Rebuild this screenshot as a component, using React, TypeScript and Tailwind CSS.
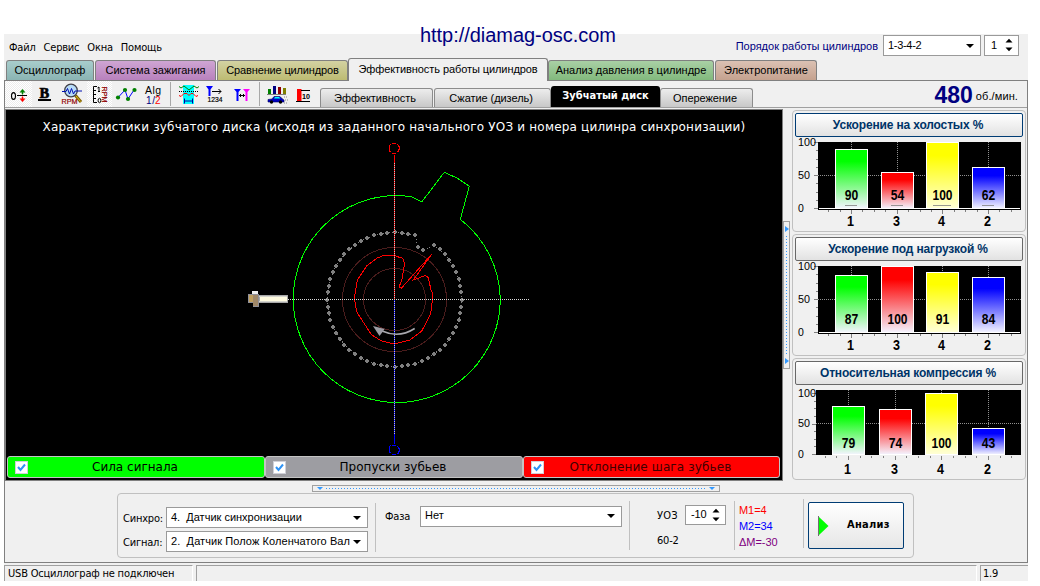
import type { ReactNode } from 'react';

const UI = "font-['Liberation_Sans',Arial,sans-serif] text-[11px]";
const TAHOMA = "font-['DejaVu_Sans_Condensed','DejaVu_Sans',sans-serif] text-[11px] tracking-[-0.2px]";

/* ---------- toolbar ---------- */

function ToolIcon({ x, w, className = '', pressed = false, children }: { x: number; w: number; className?: string; pressed?: boolean; children: ReactNode }) {
  return (
    <div className={`h-[26px] shrink-0 ${pressed ? 'bg-[repeating-conic-gradient(#ffffff_0_25%,#ececec_0_50%)] bg-[length:2px_2px]' : ''} ${className}`}>
      <svg width={w} height={26} viewBox={`${x} 81 ${w} 26`} className="block" fontFamily="Liberation Sans, sans-serif">
        {children}
      </svg>
    </div>
  );
}

function Separator() {
  return <div className="h-[24px] w-[3px] shrink-0 self-center border-l border-[#a8a8a8]" />;
}

function Toolbar() {
  return (
    <div className="flex h-[26px] items-start">
      <ToolIcon x={5} w={27} pressed>
        <ellipse cx="13.5" cy="96" rx="2" ry="3.4" fill="none" stroke="#000" strokeWidth="1.1" />
        <path d="M17 95.5h10" stroke="#000" />
        <path d="M19.500 92.500l3-3.500 3 3.500h-2.300v2h-1.400v-2z" fill="#008000" />
        <path d="M19.500 98.500l3 3.500 3-3.500h-2.300v-2h-1.400v2z" fill="#f00" />
      </ToolIcon>
      <ToolIcon x={32} w={27}>
        <text x="39.500" y="97.500" fontFamily="Liberation Serif, serif" fontWeight="bold" fontSize="14.500" stroke="#000" strokeWidth=".7">B</text>
        <path d="M38 99.500h13" stroke="#000" strokeWidth="2" shapeRendering="crispEdges" />
      </ToolIcon>
      <ToolIcon x={59} w={28}>
        <path d="M75.500 95.500l5.500 6.500" stroke="#806000" strokeWidth="3" />
        <path d="M76 96l4.500 5.500" stroke="#e0c020" strokeWidth="1" />
        <circle cx="71" cy="90.500" r="6.300" fill="#b8dcf8" stroke="#404048" strokeWidth="1.300" />
        <path d="M62 91.500h4l1.500-3 2 5.500 2-5.500 2 5.500 1.500-3h7" fill="none" stroke="#0010b0" />
        <text x="61.500" y="103.500" fontSize="7.500" textLength="16" lengthAdjust="spacingAndGlyphs" fill="#900000" stroke="#900000" strokeWidth=".2">RPM</text>
      </ToolIcon>
      <ToolIcon x={87} w={25} pressed>
        <path d="M97 86.500h-3.500v16h3.500M94 90.500h2M94 94.500h2M94 98.500h2" fill="none" stroke="#000" />
        <path d="M97.500 88l1.500-1v5M98 91.500h2" fill="none" stroke="#000" />
        <ellipse cx="99.500" cy="100.500" rx="1.400" ry="2.200" fill="none" stroke="#000" />
        <text transform="translate(102 86.500) rotate(90)" fontSize="7.500" textLength="16" lengthAdjust="spacingAndGlyphs" fill="#900000" stroke="#900000" strokeWidth=".2">RPM</text>
      </ToolIcon>
      <ToolIcon x={112} w={30}>
        <path d="M118 97.500l7-7.500 3 9 6-9" fill="none" stroke="#0000ff" />
        <g fill="#008000"><circle cx="118" cy="97.500" r="2.100" /><circle cx="125" cy="90" r="2.100" /><circle cx="128" cy="99" r="2.100" /><circle cx="134.500" cy="90" r="2.100" /></g>
      </ToolIcon>
      <ToolIcon x={142} w={28}>
        <text x="145" y="94" fontSize="10.500" textLength="16" lengthAdjust="spacing">Alg</text>
        <text x="146" y="103.500" fontSize="10" fill="#000080" textLength="9" lengthAdjust="spacing">1/</text>
        <text x="155" y="103.500" fontSize="10" fill="#f00">2</text>
      </ToolIcon>
      <Separator />
      <ToolIcon x={173} w={29}>
        <path d="M183 85h11v19h-11z" fill="#00ffff" />
        <path d="M179 86.500l2 1.500 3-2 5 4 5-4 3 2 2-1.500" fill="none" stroke="#008000" />
        <path d="M179 91.500h19" stroke="#000" strokeDasharray="1 1" />
        <path d="M179 95.500l2 1 3-3 3 0 2 2 2-2 2 0 3 3 2-1" fill="none" stroke="#f00" />
        <path d="M184.500 98.500v5M192.500 98.500v5M185 101h7" stroke="#0000a0" />
      </ToolIcon>
      <ToolIcon x={202} w={27}>
        <path d="M206 86h7l-2.500 3.500v6.500h-2v-6.500z" fill="#0000ff" />
        <path d="M212 91.500h9M218.500 89l2.500 2.500-2.500 2.500" fill="none" stroke="#000" />
        <text x="207.500" y="102" fontSize="7.500" textLength="15" lengthAdjust="spacingAndGlyphs" stroke="#000" strokeWidth=".2">1234</text>
      </ToolIcon>
      <ToolIcon x={229} w={30}>
        <path d="M234 89h7l-2.500 3v9h-2v-9z" fill="#0000ff" />
        <path d="M243 89h7l-2.500 3v9h-2v-9z" fill="#ff00ff" />
        <path d="M239 95.500h6M240.500 94v3M243.500 94v3" stroke="#000" />
      </ToolIcon>
      <Separator />
      <ToolIcon x={262} w={30}>
        <path d="M268 89h3v5h-3z" fill="#008000" /><path d="M273 86h3v8h-3z" fill="#000080" /><path d="M278 87h3v7h-3z" fill="#900000" /><path d="M283 88h3v6h-3z" fill="#808000" />
        <path d="M267 94.500h19" stroke="#808080" />
        <path d="M268 99.500l4-.500 2-2.500h6l2.500 2.500 1.500 1v2h-16z" fill="#0000c0" stroke="#000060" strokeWidth=".6" />
        <path d="M274 98.500l1-1.500h4l1.500 1.500z" fill="#00ffff" />
        <circle cx="271.500" cy="102" r="1.700" /><circle cx="280.500" cy="102" r="1.700" />
        <path d="M284 97h3M285 100h3M284 103h3" stroke="#888" strokeDasharray="1 1" />
      </ToolIcon>
      <ToolIcon x={292} w={28}>
        <path d="M297 89h4.500v12H297z" fill="#f00" />
        <path d="M301 90.500h9M296 101.500h14" stroke="#000" />
        <text x="302" y="99" fontSize="8" fontWeight="bold" textLength="8" lengthAdjust="spacingAndGlyphs">10</text>
      </ToolIcon>
      <div className="flex h-[26px] items-end">
        <SubTab label="Эффективность" width="w-[113px]" />
        <SubTab label="Сжатие (дизель)" width="w-[117px]" gap="ml-px" />
        <div className="flex h-[21px] w-[109px] items-center justify-center rounded-t-[3px] bg-black pb-px font-['DejaVu_Sans_Condensed','DejaVu_Sans',sans-serif] text-[11px] font-bold text-white">Зубчатый диск</div>
        <SubTab label="Опережение" width="w-[93px]" />
      </div>
      <div className="flex h-[26px] flex-1 items-start justify-end pr-[9px]">
        <span className="font-['Liberation_Sans',sans-serif] text-[23px] leading-[29px] font-bold text-[#000080]">480</span>
        <span className={`${UI} ml-[3px] leading-[31px] tracking-[0.1px]`}>об./мин.</span>
      </div>
    </div>
  );
}

function SubTab({ label, width, gap = '' }: { label: string; width: string; gap?: string }) {
  return (
    <div className={`${UI} flex h-[19px] items-center justify-center rounded-t-[3px] border border-b-0 border-[#8c8c8c] bg-gradient-to-b from-[#ededed] to-[#c8c8c8] pr-[3px] tracking-[-0.06px] ${width} ${gap}`}>{label}</div>
  );
}

/* ---------- top tabs ---------- */

const TABS = [
  { label: 'Осциллограф', cls: 'w-[88px] bg-gradient-to-b from-[#a8cdcc] to-[#8ab4b3]' },
  { label: 'Система зажигания', cls: 'w-[121px] ml-px bg-gradient-to-b from-[#cfa5d3] to-[#b881bd]' },
  { label: 'Сравнение цилиндров', cls: 'w-[131px] ml-px bg-gradient-to-b from-[#d3d2a2] to-[#bdbb72] tracking-[-0.15px]' },
  { label: 'Эффективность работы цилиндров', cls: 'w-[200px] active' },
  { label: 'Анализ давления в цилиндре', cls: 'w-[166px] bg-gradient-to-b from-[#a9d0a5] to-[#82b97d]' },
  { label: 'Электропитание', cls: 'w-[102px] ml-px bg-gradient-to-b from-[#dbc1b3] to-[#c5a28f]' },
];

function MainTabs() {
  return (
    <div className="flex h-[23px] items-end border-b border-[#808080] pl-[2px]">
      {TABS.map((t) =>
        t.cls.endsWith('active') ? (
          <div key={t.label} className={`${UI} mb-[-1px] flex h-[23px] w-[200px] items-center justify-center rounded-t-[3px] border border-b-0 border-[#808080] bg-[#f0f0f0] pb-px tracking-[-0.08px]`}>{t.label}</div>
        ) : (
          <div key={t.label} className={`${UI} flex h-[20px] items-center justify-center rounded-t-[3px] border border-b-0 border-[#808080] ${t.cls}`}>{t.label}</div>
        ),
      )}
    </div>
  );
}

/* ---------- form controls ---------- */

function Combo({ value, className }: { value: string; className: string }) {
  return (
    <div className={`${UI} flex shrink-0 items-center justify-between border border-[#9a9a9a] bg-white pr-[6px] pb-px pl-[4px] ${className}`}>
      <span className="whitespace-pre">{value}</span>
      <svg width="8" height="4" viewBox="0 0 8 4" className="mt-px ml-[3px] shrink-0"><path d="M0 0h8L4 4z" /></svg>
    </div>
  );
}

function Spinner({ value, className }: { value: string; className: string }) {
  return (
    <div className={`${UI} flex shrink-0 items-center justify-between border border-[#9a9a9a] bg-white pr-[5px] pb-px pl-[5px] ${className}`}>
      <span>{value}</span>
      <svg width="8" height="14" viewBox="0 0 8 14"><path d="M0.500 4.500h7L4 .8zM0.500 9.500h7L4 13.200z" /></svg>
    </div>
  );
}

/* ---------- disk diagram ---------- */

const CX = 394.5;
const CY = 299.5;

function teeth() {
  const list: [number, number][] = [];
  for (let a = 36; a <= 378; a += 6) {
    const r = (a * Math.PI) / 180;
    list.push([CX + 67.3 * Math.sin(r), CY - 67.3 * Math.cos(r)]);
  }
  list.push([418, 247], [423, 250]);
  return list;
}

function Disk() {
  const dots = teeth();
  return (
    <svg width={776} height={314} viewBox="6 142 776 314" className="block" shapeRendering="crispEdges" fill="none">
      <circle cx="394.500" cy="299.500" r="52" stroke="#4a1c1c" />
      <circle cx="394.500" cy="299.500" r="31" stroke="#4a1c1c" />
      <polygon points={dots.map((d) => d.map((n) => n.toFixed(1)).join(',')).join(' ')} stroke="#808080" strokeDasharray="1 2" />
      {dots.map(([x, y]) => (
        <g key={`${x}-${y}`} fill="#808080">
          <rect x={Math.round(x) - 2} y={Math.round(y) - 1} width={4} height={2} />
          <rect x={Math.round(x) - 1} y={Math.round(y) - 2} width={2} height={4} />
        </g>
      ))}
      <path d="M500.300 299.500A103.500 103.500 0 1 1 396.800 195.500L405 196L411.700 197L421.700 202L444.300 172.300L457 178L469.300 186.300L460.300 219.300A103.500 103.500 0 0 1 500.300 299.500" stroke="#00ff00" />
      <path d="M384 255.300L394 255.300L399.300 257.300L402.700 258.300L404.700 264L403.300 270L402.700 276.700L399.300 286.700L401.300 288.300L414 274L431.700 254.300L423.300 266L413.300 280L418.300 278.300L425.300 275.300L428.300 277.700L431 290L432.700 294L432 303.300L430.700 313.300L425 325L421.700 331L410 340L394 344L381.700 341L371.700 335L364 323.300L356.700 311.700L354.300 298.300L357.300 280L366.700 266L376.700 258.300Z" stroke="#ff0000" />
      <path d="M394.500 155V299" stroke="#ff0000" />
      <path d="M394.500 299V444" stroke="#0000ff" />
      <path d="M394.500 163V434" stroke="#c8c8c8" strokeDasharray="1 1" />
      <path d="M288 299.500H529" stroke="#d8d8d8" strokeDasharray="1 1" />
      <path d="M392 143.500h4M397.500 144.500l1.500 2v3l-1.500 3M396 153.500h-4M390.500 152.500l-1.500-3v-3l1.500-2" stroke="#ff0000" />
      <path d="M392 445.500h4M397.500 446.500l1.500 2v3l-1.500 3M396 454.500h-4M390.500 453.500l-1.500-3v-3l1.500-2" stroke="#0000ff" />
      <g shapeRendering="geometricPrecision">
        <path d="M414.700 328.500Q399 338.500 382 331" stroke="#a8a8ae" strokeWidth="1.500" />
        <path d="M373 326L384.700 329L379.500 336Z" fill="#9c9ca4" />
      </g>
      <rect x="252" y="291" width="6" height="3" fill="#f0f0f0" />
      <rect x="253.500" y="294.500" width="5" height="12" fill="#b09468" stroke="#909098" />
      <rect x="248.500" y="294.500" width="10" height="8" fill="#c0a060" stroke="#909098" />
      <rect x="253" y="295" width="5" height="11" fill="#a08868" />
      <rect x="259.500" y="295.500" width="28" height="7" fill="#fffbe0" stroke="#a8a8a8" />
      <path d="M259 296.500h28M259 301.500h28" stroke="#d4d4cc" />
    </svg>
  );
}

function Legend({ label, className, textClass = '' }: { label: string; className: string; textClass?: string }) {
  return (
    <div className={`flex h-[22px] shrink-0 items-center rounded-[3px] border border-[#c4c4c4] pl-[7px] ${className}`}>
      <div className="flex size-[13px] items-center justify-center border border-[#d0d0d8] bg-white">
        <svg width="9" height="9" viewBox="0 0 9 9"><path d="M1 4l2.500 3L8 1.500" fill="none" stroke="#2f93f5" strokeWidth="2" /></svg>
      </div>
      <div className={`flex-1 pr-[22px] text-center font-['DejaVu_Sans',sans-serif] text-[12px] ${textClass}`}>{label}</div>
    </div>
  );
}

/* ---------- bar charts ---------- */

type Chart = { title: string; left: number; top: number; base: number; zero: number; hundred: number; focus?: boolean; marks?: boolean; bars: { x: number; top: number; v: number; n: number }[] };

const CHARTS: Chart[] = [
  { title: 'Ускорение на холостых %', left: 818, top: 5, base: 71, zero: 71, hundred: 5, focus: true, marks: true, bars: [{ x: 835, top: 12, v: 90, n: 1 }, { x: 881, top: 35, v: 54, n: 3 }, { x: 926, top: 5, v: 100, n: 4 }, { x: 972, top: 30, v: 62, n: 2 }] },
  { title: 'Ускорение под нагрузкой %', left: 818, top: 5, base: 71, zero: 71, hundred: 5, bars: [{ x: 835, top: 14, v: 87, n: 1 }, { x: 881, top: 5, v: 100, n: 3 }, { x: 926, top: 11, v: 91, n: 4 }, { x: 972, top: 16, v: 84, n: 2 }] },
  { title: 'Относительная компрессия %', left: 816, top: 5, base: 69, zero: 69, hundred: 8, bars: [{ x: 832, top: 21, v: 79, n: 1 }, { x: 879, top: 24, v: 74, n: 3 }, { x: 925, top: 8, v: 100, n: 4 }, { x: 972, top: 43, v: 43, n: 2 }] },
];
const BAR_COLORS = ['#00ff00', '#ff0000', '#ffff00', '#0000ff'];

function BarPanel({ chart, id }: { chart: Chart; id: number }) {
  const { left, top, base, zero, hundred, bars } = chart;
  const mid = Math.floor((zero + hundred) / 2);
  const leftTicks = Array.from({ length: 9 }, (_, i) => Math.round(hundred + ((zero - hundred) * i) / 8) + 0.5);
  const step = (bars[3].x - bars[0].x) / 12;
  return (
    <section className="h-[122px] rounded-[4px] border border-[#c0c0c0] px-[2px] pt-[2px]">
      <div className={`flex h-[24px] items-center justify-center rounded-[2px] border bg-gradient-to-b from-white to-[#e2e2e2] pr-[2px] font-['Liberation_Sans',sans-serif] text-[12px] font-bold tracking-[-0.16px] text-[#003468] ${chart.focus ? 'border-[#003c74]' : 'border-[#686868]'}`}>{chart.title}</div>
      <svg width={228} height={94} viewBox="795 0 228 94" className="block" fontFamily="Liberation Sans, sans-serif">
        <defs>
          {BAR_COLORS.map((c, i) => (
            <linearGradient key={c} id={`bar-${id}-${i}`} x1="0" y1="0" x2="0" y2="1">
              <stop offset=".2" stopColor={c} />
              <stop offset="1" stopColor={i === 2 ? '#ffffd8' : '#f4f4ff'} />
            </linearGradient>
          ))}
        </defs>
        <g shapeRendering="crispEdges">
          <rect x={left} y={top} width={1021 - left} height={base - top + (id === 2 ? 1 : 2)} fill="#000" />
          {id !== 2 && <path d={`M${left + 1} ${base + 0.5}H1020`} stroke="#fff" />}
          <path d={`M${left} ${mid + 0.5}H1021`} stroke="#909090" strokeDasharray="1 1" />
          {bars.map((b) => (
            <path key={b.n} d={`M${b.x + 16.5} ${top}V${base}`} stroke="#909090" strokeDasharray="1 1" />
          ))}
          {leftTicks.map((y, i) => (
            <path key={y} d={`M${left - (i % 4 === 0 ? 4 : 2)} ${y}H${left}`} stroke="#808080" />
          ))}
          {Array.from({ length: 17 }, (_, i) => (
            <path key={i} d={`M${Math.round(bars[0].x + 16 + step * (i - 2)) + 0.5} ${base + 1.5}v${(i - 2) % 4 === 0 ? 4 : 2}`} stroke="#808080" />
          ))}
          {bars.map((b, i) => (
            <g key={b.n}>
              <rect x={b.x + 0.5} y={b.top + 0.5} width={32} height={base - b.top} fill={`url(#bar-${id}-${i})`} stroke="#fff" />
              {chart.marks && <path d={`M${b.x + (b.v === 100 ? 7 : 10)} ${base - 2.5}h${b.v === 100 ? 18 : 12}`} stroke="#808080" strokeOpacity=".8" />}
            </g>
          ))}
        </g>
        {bars.map((b) => (
          <g key={b.n} fontWeight="bold" fontSize="14" textAnchor="middle">
            <text x={b.x + 16.5} y={id === 2 ? base - 6 : base - 8} textLength={b.v === 100 ? 20 : 13.5} lengthAdjust="spacingAndGlyphs">{b.v}</text>
            <text x={b.x + 15.5} y={base + (id === 2 ? 20 : 18)} textLength={7} lengthAdjust="spacingAndGlyphs">{b.n}</text>
          </g>
        ))}
        <g fontSize="10.500">
          <text x="798" y={hundred + 4} textLength="18" lengthAdjust="spacingAndGlyphs">100</text>
          <text x="798" y={mid + 4} textLength="12" lengthAdjust="spacingAndGlyphs">50</text>
          <text x="798" y={zero + 4}>0</text>
        </g>
      </svg>
    </section>
  );
}

/* ---------- page ---------- */

export default function App() {
  return (
    <div className="relative flex h-[586px] w-[1040px] flex-col overflow-hidden bg-white pt-[34px] pl-[4px] text-black">
      <div className="absolute top-[23px] left-[420px] font-['Liberation_Sans',sans-serif] text-[20px] leading-[24px] tracking-[-0.04px] text-[#000080]">http://diamag-osc.com</div>

      <div className="flex h-[547px] w-[1024px] flex-col bg-[#f0f0f0]">
        <header className="flex h-[24px] items-center pl-[5px]">
          <nav className={`${TAHOMA} flex gap-[8px] pt-[4px]`}>
            <span>Файл</span><span>Сервис</span><span>Окна</span><span>Помощь</span>
          </nav>
          <span className={`${UI} ml-auto text-[#000080]`}>Порядок работы цилиндров</span>
          <Combo value="1-3-4-2" className="mb-px ml-[5px] h-[21px] w-[98px] pl-[2px] tracking-[-0.3px]" />
          <Spinner value="1" className="mr-[9px] mb-px ml-[3px] h-[21px] w-[35px] pl-[6px]" />
        </header>

        <MainTabs />

        <main className="flex h-[482px] flex-col border-r border-b border-l border-[#808080]">
          <Toolbar />
          <div className="h-[2px] border-t border-[#a0a0a0]" />

          <div className="flex h-[372px]">
            <div className="h-[372px] w-[778px] border border-[#808080] bg-black">
              <div className="flex h-[32px] items-center justify-center pt-px font-['DejaVu_Sans',sans-serif] text-[12px] tracking-[0.19px] whitespace-nowrap text-white">
                Характеристики зубчатого диска (исходя из заданного начального УОЗ и номера цилинра синхронизации)
              </div>
              <Disk />
              <div className="flex pl-px">
                <Legend label="Сила сигнала" className="w-[258px] bg-[#00ff00]" />
                <Legend label="Пропуски зубьев" className="w-[258px] bg-[#9d9da2]" />
                <Legend label="Отклонение шага зубьев" className="w-[257px] bg-[#ff0000] text-[#400000]" textClass="tracking-[0.13px]" />
              </div>
            </div>

            <div className="mt-[112px] flex h-[148px] w-[7px] flex-col items-center justify-between border border-[#a0a0a0] py-[4px]">
              <svg width="4" height="6" viewBox="0 0 4 6"><path d="M0 0v6l4-3z" fill="#3399ff" /></svg>
              <svg width="1" height="118" viewBox="0 0 1 118" shapeRendering="crispEdges"><path d="M.5 0V118" stroke="#3399ff" strokeDasharray="1 2" /></svg>
              <svg width="4" height="6" viewBox="0 0 4 6"><path d="M0 0v6l4-3z" fill="#3399ff" /></svg>
            </div>

            <aside className="ml-[2px] flex w-[234px] flex-col gap-[2px] pt-px">
              {CHARTS.map((c, i) => <BarPanel key={c.title} chart={c} id={i} />)}
            </aside>
          </div>

          <div className="mt-[4px] ml-[307px] flex h-[7px] w-[408px] items-center justify-between border border-[#a0a0a0] px-[4px]">
            <svg width="6" height="3" viewBox="0 0 6 3"><path d="M0 0h6L3 3z" fill="#3399ff" /></svg>
            <svg width="380" height="1" viewBox="0 0 380 1" shapeRendering="crispEdges"><path d="M0 .5H380" stroke="#3399ff" strokeDasharray="1 2" /></svg>
            <svg width="6" height="3" viewBox="0 0 6 3"><path d="M0 0h6L3 3z" fill="#3399ff" /></svg>
          </div>

          <div className="mt-px ml-[112px] flex h-[65px] w-[797px] rounded-[4px] border border-[#c0c0c0]">
            <div className="ml-[5px] flex w-[245px] flex-col gap-[3px] pt-[13px]">
              <div className="flex items-center"><span className={`${TAHOMA} w-[43px] pt-[3px]`}>Синхро:</span><Combo value="4.  Датчик синхронизации" className="h-[21px] w-[202px]" /></div>
              <div className="flex items-center"><span className={`${TAHOMA} w-[43px] pt-[3px]`}>Сигнал:</span><Combo value="2.  Датчик Полож Коленчатого Вал" className="h-[21px] w-[202px] tracking-[0.08px]" /></div>
            </div>
            <div className="mt-[9px] ml-[7px] h-[49px] w-px bg-[#c0c0c0]" />
            <div className="ml-[9px] flex h-[21px] items-center self-start pt-[22px]">
              <span className={`${TAHOMA} w-[35px] pt-[2px]`}>Фаза</span><Combo value="Нет" className="h-[21px] w-[202px]" />
            </div>
            <div className="mt-[7px] ml-[7px] h-[49px] w-px bg-[#c0c0c0]" />
            <div className={`${TAHOMA} ml-[27px] flex w-[70px] flex-col pt-[11px]`}>
              <div className="flex items-center"><span className="w-[28px] pt-[2px] tracking-[0.2px]">УОЗ</span><Spinner value="-10" className="h-[20px] w-[41px] pl-[4px]" /></div>
              <span className="mt-[8px] leading-[16px]">60-2</span>
            </div>
            <div className="mt-[7px] ml-[7px] h-[49px] w-px bg-[#c0c0c0]" />
            <div className="ml-[4px] w-[64px] pt-[8px] font-['Liberation_Sans',sans-serif] text-[11px] leading-[16px] tracking-[-0.05px]">
              <div className="text-[#ff0000]">M1=4</div>
              <div className="text-[#0000ff]">M2=34</div>
              <div className="text-[#800080]">ΔM=-30</div>
            </div>
            <div className="mt-[5px] h-[49px] w-px bg-[#c0c0c0]" />
            <button className="mt-[8px] ml-[4px] flex h-[47px] w-[96px] items-center rounded-[2px] border border-[#003c74] bg-gradient-to-b from-white to-[#e6e6e6] pl-[9px]">
              <svg width="11" height="20" viewBox="0 0 11 20"><path d="M.5 .5v19L10.500 10z" fill="#00ff00" /><path d="M.5 0v20" stroke="#707070" /></svg>
              <span className="ml-[18px] font-['DejaVu_Sans_Condensed','DejaVu_Sans',sans-serif] text-[11px] font-bold tracking-[0.3px]">Анализ</span>
            </button>
          </div>
        </main>

        <footer className={`${TAHOMA} mt-[2px] flex h-[16px] items-center gap-[3px]`}>
          <div className="flex h-[16px] w-[189px] items-center border-t border-r border-l border-[#a0a0a0] border-r-white pt-px pl-[3px] whitespace-nowrap">USB Осциллограф не подключен</div>
          <div className="h-[16px] w-[781px] border-t border-r border-l border-[#a0a0a0] border-r-white" />
          <div className="flex h-[16px] w-[48px] items-center border-t border-l border-[#a0a0a0] pt-px pl-[2px] text-[11px]">1.9</div>
        </footer>
      </div>
    </div>
  );
}
